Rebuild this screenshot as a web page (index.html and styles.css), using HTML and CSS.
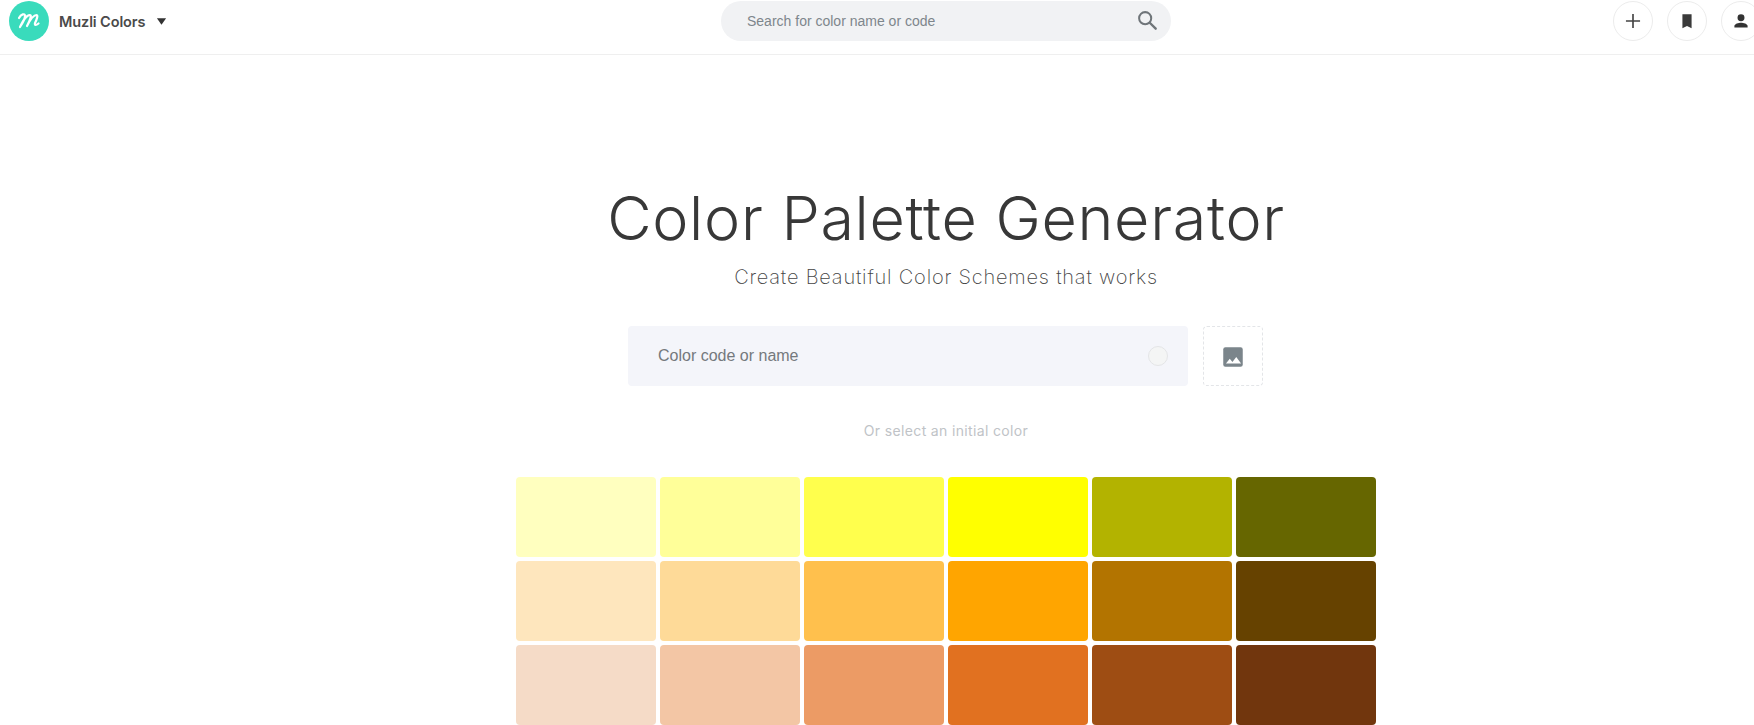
FILE: index.html
```html
<!DOCTYPE html>
<html lang="en">
<head>
<meta charset="utf-8">
<title>Color Palette Generator</title>
<link rel="stylesheet" href="styles.css">
</head>
<body>
<header class="topbar">
  <div class="brand">
    <svg class="logo" viewBox="0 0 40 40"><circle cx="20" cy="20" r="20" fill="#39dbbc"/><path d="M10 17c2-4 6-5 6-2 0 3-3 8-5 11 3-6 6-12 10-12 2 0 0 5-3 11 3-6 7-11 9.500-11 2 0 0 5-1.500 8-.6 2.500 1 2.500 3.500.5" fill="none" stroke="#fff" stroke-width="2.200" stroke-linecap="round" stroke-linejoin="round"/></svg>
    <span class="brand-name">Muzli Colors</span>
    <svg class="caret" viewBox="0 0 12 8"><path d="M1 0h10L6 7z" fill="#333"/></svg>
  </div>
  <div class="search">
    <span class="search-text">Search for color name or code</span>
    <svg class="search-icon" viewBox="0 0 24 24"><circle cx="10" cy="10" r="6.600" fill="none" stroke="#6f7579" stroke-width="2.200"/><path d="M15 15l6.500 6.500" stroke="#6f7579" stroke-width="2.600" stroke-linecap="round"/></svg>
  </div>
  <nav class="actions">
    <button class="round"><svg viewBox="0 0 24 24"><path d="M4.300 12h15.400M12 4.300v15.400" stroke="#444" stroke-width="1.800" fill="none"/></svg></button>
    <button class="round"><svg viewBox="0 0 24 24"><path d="M7 4.500h10V20l-5-2.500L7 20z" fill="#3a3a3a"/></svg></button>
    <button class="round"><svg viewBox="0 0 24 24"><circle cx="12" cy="8.500" r="3.800" fill="#333"/><path d="M4.800 19v-1.500c0-2.500 4.700-3.700 7.200-3.700s7.200 1.200 7.200 3.700V19z" fill="#333"/></svg></button>
  </nav>
</header>
<main class="main">
  <h1 class="title">Color Palette Generator</h1>
  <p class="subtitle">Create Beautiful Color Schemes that works</p>
  <div class="picker">
    <div class="field">
      <span class="field-text">Color code or name</span>
      <span class="dot"></span>
    </div>
    <div class="upload"><svg viewBox="0 0 24 24"><path d="M3 5a2 2 0 0 1 2-2h14a2 2 0 0 1 2 2v14a2 2 0 0 1-2 2H5a2 2 0 0 1-2-2z" fill="#7b858b"/><path d="M5.500 18l3.500-4.500 2.500 3 3.500-4.500 4.500 6z" fill="#fff"/></svg></div>
  </div>
  <p class="hint">Or select an initial color</p>
  <div class="grid">
    <div class="sw c11"></div><div class="sw c12"></div><div class="sw c13"></div><div class="sw c14"></div><div class="sw c15"></div><div class="sw c16"></div>
    <div class="sw c21"></div><div class="sw c22"></div><div class="sw c23"></div><div class="sw c24"></div><div class="sw c25"></div><div class="sw c26"></div>
    <div class="sw c31"></div><div class="sw c32"></div><div class="sw c33"></div><div class="sw c34"></div><div class="sw c35"></div><div class="sw c36"></div>
  </div>
</main>
</body>
</html>
```
FILE: styles.css
```css
html, body { margin: 0; padding: 0; height: 725px; overflow: hidden; background: #fff; }
body { font-family: "Liberation Sans", Arial, sans-serif; color: #333; }

.topbar {
  height: 53px;
  border-bottom: 1px solid #efefef;
  display: grid;
  grid-template-columns: 712px 450px 1fr;
  align-items: start;
  padding: 1px 0 0 9px;
}
.brand { display: flex; align-items: center; height: 40px; }
.logo { width: 40px; height: 40px; }
.brand-name { font: 600 14.500px "Inter", sans-serif; color: #4a4a4a; margin-left: 10px; letter-spacing: -.1px; }
.caret { width: 11px; height: 8px; margin-left: 11px; margin-top: 1px; }

.search {
  height: 40px; border-radius: 20px; background: #f1f2f4;
  display: flex; align-items: center; justify-content: space-between;
  padding: 0 13px 0 26px; box-sizing: border-box;
}
.search-text { font-size: 14px; color: #7e868c; }
.search-icon { width: 22px; height: 22px; margin-bottom: 3px; }

.actions { display: flex; gap: 14px; justify-content: flex-end; margin-right: -7px; }
.round {
  width: 40px; height: 40px; border-radius: 50%; border: 1px solid #ececec;
  background: #fff; padding: 0; display: flex; align-items: center; justify-content: center; flex: none;
}
.round svg { width: 22px; height: 22px; }

.main { padding-left: 138px; display: flex; flex-direction: column; align-items: center; }
.title {
  margin: 126px 0 0; font: 300 61px/74px "Inter", sans-serif; letter-spacing: .7px; color: #383838; white-space: nowrap;
}
.subtitle { margin: 8px 0 0; font: 200 20px/28px "Inter", sans-serif; letter-spacing: .8px; color: #444; }
.picker { display: flex; gap: 15px; margin-top: 35px; padding-right: 1px; }
.field {
  width: 560px; height: 60px; background: #f4f5fa; border-radius: 4px;
  display: flex; align-items: center; justify-content: space-between;
  padding: 0 20px 0 30px; box-sizing: border-box;
}
.field-text { font-size: 16px; color: #75797d; }
.dot { width: 20px; height: 20px; border-radius: 50%; background: #f4f5f5; border: 1px solid #e4e5e7; box-sizing: border-box; }
.upload {
  width: 60px; height: 60px; border: 1px dashed #e3e5e8; border-radius: 4px; box-sizing: border-box;
  display: flex; align-items: center; justify-content: center;
}
.upload svg { width: 26px; height: 26px; margin-top: 2px; }
.hint { margin: 35px 0 0; font: 400 14px/20px "Inter", sans-serif; letter-spacing: .35px; color: #c0c3c7; }

.grid { display: grid; grid-template-columns: repeat(6, 140px); grid-auto-rows: 80px; gap: 4px; margin-top: 36px; }
.sw { border-radius: 4px; }
.c11 { background: #ffffbf; } .c12 { background: #ffff99; } .c13 { background: #ffff4d; }
.c14 { background: #ffff00; } .c15 { background: #b3b300; } .c16 { background: #666600; }
.c21 { background: #fee6bd; } .c22 { background: #feda98; } .c23 { background: #ffc04d; }
.c24 { background: #ffa500; } .c25 { background: #b37400; } .c26 { background: #664200; }
.c31 { background: #f5dbc7; } .c32 { background: #f3c6a5; } .c33 { background: #ec9b65; }
.c34 { background: #e17120; } .c35 { background: #9e4d13; } .c36 { background: #71360d; }
```
